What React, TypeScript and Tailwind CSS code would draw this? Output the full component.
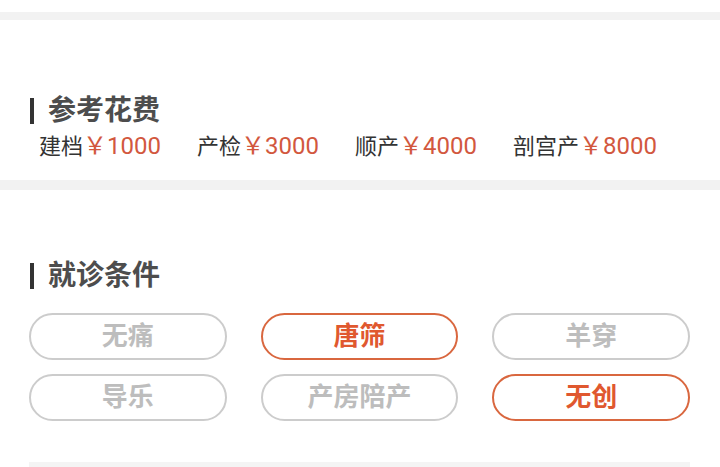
import React from 'react';

const font = { fontFamily: 'Roboto, "Noto Sans CJK SC", "Noto Sans", sans-serif' };

const costs = [
  { label: '建档', price: '￥1000' },
  { label: '产检', price: '￥3000' },
  { label: '顺产', price: '￥4000' },
  { label: '剖宫产', price: '￥8000' },
];

const conditions = [
  { name: '无痛', active: false },
  { name: '唐筛', active: true },
  { name: '羊穿', active: false },
  { name: '导乐', active: false },
  { name: '产房陪产', active: false },
  { name: '无创', active: true },
];

const SectionTitle: React.FC<{ title: string }> = ({ title }) => (
  <div className="flex items-center h-[30px]">
    <span className="block w-[4px] h-[26px] bg-[#333333] ml-[30px]" />
    <span className="ml-[14px] text-[28px] leading-[30px] font-bold text-[#4d4d4d]">{title}</span>
  </div>
);

export default function App() {
  return (
    <div className="w-[720px] h-[467px] overflow-hidden bg-white" style={font}>
      <div className="h-[12px]" />
      <div className="h-[8px] bg-[#f2f2f2]" />

      {/* 参考花费 */}
      <div className="pt-[76px] pb-[20px]">
        <SectionTitle title="参考花费" />
        <div className="flex items-center h-[26px] gap-x-[36px] pl-[39px] mt-[8px]">
          {costs.map((c) => (
            <span key={c.label} className="whitespace-nowrap leading-[26px]">
              <span className="text-[22px] leading-[26px] text-[#333333]">{c.label}</span>
              <span className="text-[24px] leading-[26px] text-[#d2583e]">{c.price}</span>
            </span>
          ))}
        </div>
      </div>

      <div className="h-[10px] bg-[#f2f2f2]" />

      {/* 就诊条件 */}
      <div className="pt-[71px]">
        <SectionTitle title="就诊条件" />
        <div className="grid grid-cols-3 gap-x-[34px] gap-y-[14px] pl-[29px] pr-[30px] mt-[22px]">
          {conditions.map((c) => (
            <div
              key={c.name}
              className={
                c.active
                  ? 'h-[47px] rounded-full border-2 border-[#d9673f] flex items-center justify-center text-[26px] font-bold text-[#e0582f]'
                  : 'h-[47px] rounded-full border-2 border-[#cccccc] flex items-center justify-center text-[26px] font-bold text-[#bdbdbd]'
              }
            >
              {c.name}
            </div>
          ))}
        </div>
        <div className="mt-[41px] mx-[29px] mr-[30px] h-[6px] bg-[#f4f4f4]" />
      </div>
    </div>
  );
}
